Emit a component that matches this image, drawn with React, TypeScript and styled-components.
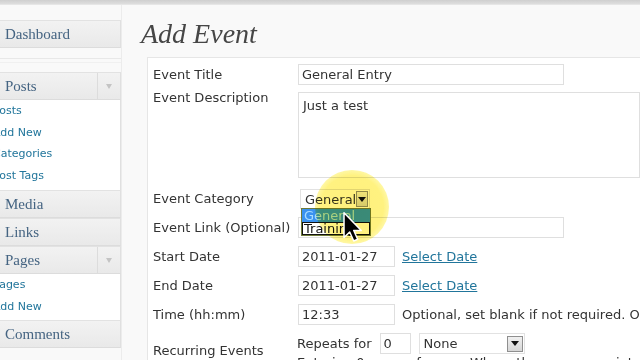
import React from "react";
import styled, { createGlobalStyle } from "styled-components";

const GlobalStyle = createGlobalStyle`
  html, body {
    margin: 0;
    padding: 0;
    width: 640px;
    height: 360px;
    overflow: hidden;
    background: #f9f9f9;
  }
  #root { height: 100%; }
`;

const Page = styled.div`
  position: relative;
  height: 360px;
  display: flex;
  flex-direction: column;
  overflow: hidden;
`;

const TopBar = styled.div`
  height: 5px;
  flex: none;
  background: linear-gradient(#cfcfcf, #dedede);
  border-bottom: 1px solid #e6e6e6;
  box-sizing: border-box;
`;

const Body = styled.div`
  flex: 1;
  display: flex;
  min-height: 0;
`;

const Sidebar = styled.nav`
  width: 122px;
  flex: none;
  padding-top: 15px;
  overflow: hidden;
  border-right: 1px solid #ececec;
  box-sizing: border-box;
`;

const MenuHead = styled.div`
  box-sizing: border-box;
  height: 28px;
  display: flex;
  align-items: center;
  background: linear-gradient(#f2f2f2, #e9e9e9);
  border-top: 1px solid #e2e2e2;
  border-bottom: 1px solid #dcdcdc;
  border-right: 1px solid #e0e0e0;
  font-family: "Liberation Serif", Georgia, serif;
  font-size: 15px;
  color: #456482;
`;

const HeadText = styled.span`
  flex: 1;
  padding-left: 5px;
`;

const Toggle = styled.span`
  width: 22px;
  height: 100%;
  border-left: 1px solid #dcdcdc;
  display: flex;
  align-items: center;
  justify-content: center;
  &::after {
    content: "";
    border-left: 3px solid transparent;
    border-right: 3px solid transparent;
    border-top: 5px solid #c4c4c4;
  }
`;

const Separator = styled.div`
  height: 24px;
  display: flex;
  align-items: center;
  &::before {
    content: "";
    flex: 1;
    height: 3px;
    border-top: 1px solid #e8e8e8;
    border-bottom: 1px solid #f0f0f0;
  }
`;

const SubList = styled.div<{ $pad: number }>`
  background: #fff;
  border-right: 1px solid #e0e0e0;
  padding-bottom: ${(p) => p.$pad}px;
`;

const SubItem = styled.div`
  height: 21.5px;
  line-height: 21.5px;
  margin-left: -7px;
  font-family: "DejaVu Sans", Verdana, sans-serif;
  font-size: 11px;
  color: #21759b;
  white-space: nowrap;
`;

const Main = styled.main`
  flex: 1;
  min-width: 0;
  overflow: hidden;
  padding: 12px 0 0 19px;
`;

const Title = styled.h2`
  margin: 0;
  height: 34px;
  line-height: 34px;
  font-family: "Liberation Serif", Georgia, serif;
  font-style: italic;
  font-weight: normal;
  font-size: 28px;
  color: #464646;
`;

const Form = styled.div`
  margin: 6px 0 0 6px;
  padding: 6px 0 0 5px;
  background: #fff;
  border-top: 1px solid #e6e6e6;
  border-left: 1px solid #e6e6e6;
  height: 320px;
  font-family: "DejaVu Sans", Verdana, sans-serif;
  font-size: 13px;
  color: #333;
  white-space: nowrap;
`;

const Row = styled.div<{ $space?: number; $top?: boolean }>`
  display: flex;
  align-items: ${(p) => (p.$top ? "flex-start" : "center")};
  margin-top: ${(p) => p.$space ?? 0}px;
`;

const Label = styled.div<{ $tight?: boolean; $drop?: number }>`
  width: 145px;
  flex: none;
  line-height: ${(p) => (p.$tight ? "11px" : "20px")};
  padding-top: ${(p) => p.$drop ?? 0}px;
`;

const Fields = styled.div<{ $shift?: number }>`
  display: flex;
  align-items: center;
  margin-left: ${(p) => p.$shift ?? 0}px;
`;

const Input = styled.input<{ $w: number }>`
  box-sizing: border-box;
  width: ${(p) => p.$w}px;
  height: 21px;
  padding: 0 3px;
  border: 1px solid #dfdfdf;
  border-radius: 0;
  background: #fff;
  font-family: "DejaVu Sans", Verdana, sans-serif;
  font-size: 13px;
  color: #333;
  outline: none;
`;

const TextArea = styled.textarea`
  box-sizing: border-box;
  width: 400px;
  height: 86px;
  padding: 5px 4px;
  border: 1px solid #dfdfdf;
  background: #fff;
  font-family: "DejaVu Sans", Verdana, sans-serif;
  font-size: 13px;
  line-height: 16px;
  color: #333;
  resize: none;
  outline: none;
`;

const Select = styled.div<{ $w: number; $h: number; $gap?: number }>`
  position: relative;
  box-sizing: border-box;
  width: ${(p) => p.$w}px;
  height: ${(p) => p.$h}px;
  margin-left: ${(p) => p.$gap ?? 0}px;
  border: 1px solid #e2e2e2;
  background: #fff;
  display: flex;
  align-items: center;
  padding-left: 4px;
`;

const SelectText = styled.span`
  flex: 1;
`;

const SelectButton = styled.span`
  width: 16px;
  height: 16px;
  margin-right: 1px;
  box-sizing: border-box;
  border: 1px solid #8f8f8f;
  background: linear-gradient(#f0f0f0, #d6d6d6);
  display: flex;
  align-items: center;
  justify-content: center;
  &::after {
    content: "";
    border-left: 4px solid transparent;
    border-right: 4px solid transparent;
    border-top: 5px solid #111;
  }
`;

const DropList = styled.div`
  position: absolute;
  top: 18px;
  left: 0;
  width: 70px;
  box-sizing: border-box;
  border: 1px solid #6f7b3a;
  background: #fff;
  z-index: 2;
`;

const Option = styled.div<{ $active?: boolean }>`
  height: 13px;
  line-height: 13px;
  padding-left: 2px;
  color: ${(p) => (p.$active ? "#a8dcff" : "#111")};
  background: ${(p) => (p.$active ? "#3a92f0" : "transparent")};
  outline: ${(p) => (p.$active ? "none" : "1px solid #111")};
  outline-offset: -1px;
`;

const Link = styled.a`
  margin-left: 7px;
  color: #21759b;
  text-decoration: underline;
`;

const Note = styled.span`
  margin-left: 7px;
`;

const Stack = styled.div`
  display: flex;
  flex-direction: column;
  margin-left: -1px;
`;

const Inline = styled.span<{ $gap?: number }>`
  margin-right: ${(p) => p.$gap ?? 0}px;
`;

const Help = styled.div`
  margin-top: 1px;
  line-height: 15px;
`;

const Spotlight = styled.div`
  position: absolute;
  left: 315px;
  top: 170px;
  width: 74px;
  height: 74px;
  border-radius: 50%;
  background: radial-gradient(circle, #fff07c 0, #fff280 60%, rgba(255, 250, 160, 0.6) 80%, rgba(255, 255, 255, 0) 100%);
  mix-blend-mode: multiply;
  pointer-events: none;
  z-index: 3;
`;

const Pointer = styled.svg`
  position: absolute;
  left: 343px;
  top: 212px;
  z-index: 4;
`;

export default function App(): React.ReactElement {
  return (
    <Page>
      <GlobalStyle />
      <TopBar />
      <Body>
        <Sidebar>
          <MenuHead><HeadText>Dashboard</HeadText></MenuHead>
          <Separator />
          <MenuHead><HeadText>Posts</HeadText><Toggle /></MenuHead>
          <SubList $pad={4}>
            <SubItem>Posts</SubItem>
            <SubItem>Add New</SubItem>
            <SubItem>Categories</SubItem>
            <SubItem>Post Tags</SubItem>
          </SubList>
          <MenuHead><HeadText>Media</HeadText></MenuHead>
          <MenuHead><HeadText>Links</HeadText></MenuHead>
          <MenuHead><HeadText>Pages</HeadText><Toggle /></MenuHead>
          <SubList $pad={3}>
            <SubItem>Pages</SubItem>
            <SubItem>Add New</SubItem>
          </SubList>
          <MenuHead><HeadText>Comments</HeadText></MenuHead>
        </Sidebar>
        <Main>
          <Title>Add Event</Title>
          <Form>
            <Row>
              <Label>Event Title</Label>
              <Input $w={266} defaultValue="General Entry" readOnly />
            </Row>
            <Row $space={7} $top>
              <Label $tight>Event Description</Label>
              <TextArea defaultValue="Just a test" readOnly />
            </Row>
            <Row $space={11}>
              <Label>Event Category</Label>
              <Fields $shift={2}>
                <Select $w={70} $h={20}>
                  <SelectText>General</SelectText>
                  <SelectButton />
                  <DropList>
                    <Option $active>General</Option>
                    <Option>Training</Option>
                  </DropList>
                </Select>
              </Fields>
            </Row>
            <Row $space={8}>
              <Label>Event Link (Optional)</Label>
              <Input $w={266} readOnly />
            </Row>
            <Row $space={8}>
              <Label>Start Date</Label>
              <Fields>
                <Input $w={97} defaultValue="2011-01-27" readOnly />
                <Link href="#">Select Date</Link>
              </Fields>
            </Row>
            <Row $space={8}>
              <Label>End Date</Label>
              <Fields>
                <Input $w={97} defaultValue="2011-01-27" readOnly />
                <Link href="#">Select Date</Link>
              </Fields>
            </Row>
            <Row $space={8}>
              <Label>Time (hh:mm)</Label>
              <Fields>
                <Input $w={97} defaultValue="12:33" readOnly />
                <Note>Optional, set blank if not required. Only used for display.</Note>
              </Fields>
            </Row>
            <Row $space={8} $top>
              <Label $drop={8}>Recurring Events</Label>
              <Stack>
                <Fields>
                  <Inline $gap={8}>Repeats for</Inline>
                  <Input $w={31} defaultValue="0" readOnly />
                  <Select $w={106} $h={21} $gap={8}>
                    <SelectText>None</SelectText>
                    <SelectButton />
                  </Select>
                </Fields>
                <Help>Entering 0 means forever. Where the recurrence interval is not</Help>
              </Stack>
            </Row>
          </Form>
        </Main>
      </Body>
      <Spotlight />
      <Pointer width="20" height="30" viewBox="0 0 13 20">
        <path d="M0.5 0.5 L0.5 17 L4.3 13.3 L7 19.3 L9.6 18.2 L7 12.3 L12 12.3 Z" fill="#000" stroke="#fff" strokeWidth="1" strokeLinejoin="round" />
      </Pointer>
    </Page>
  );
}
